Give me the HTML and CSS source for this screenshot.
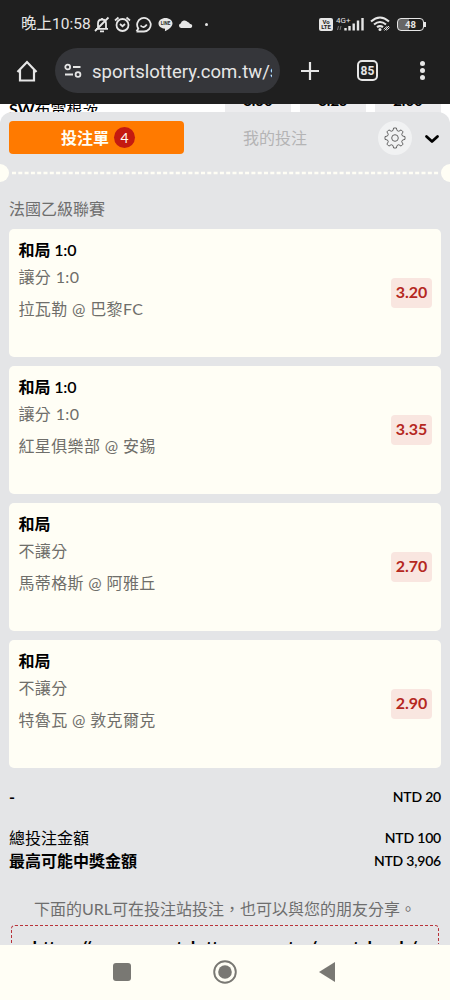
FILE: index.html
```html
<!DOCTYPE html>
<html lang="zh-Hant">
    <head>
        <meta charset="utf-8">
        <link rel="stylesheet" href="styles.css">
        <title>投注單</title>
    </head>
    <body>
        <div class="browser">
            <div class="status">
                <span class="clock">晚上10:58</span>
                <svg class="bell" width="16" height="17" viewBox="0 0 16 17">
                    <path d="M2 12.800h12M4 12V7.500Q4 3.500 8 3.500Q12 3.500 12 7.500V12M6 15.300h4M8 2v1.500M1 15L14.500 1.500" />
                </svg>
                <svg class="alarm" width="17" height="17" viewBox="0 0 17 17">
                    <circle cx="8.500" cy="9" r="6" />
                    <path d="M1 4.500L4.500 1.500M12.500 1.500L16 4.500M6 8l2.500 2.200L11 8" />
                </svg>
                <svg class="chat" width="17" height="17" viewBox="0 0 17 17">
                    <path d="M1.500 15.500h7.300A6.800 6.800 0 1 0 3.300 12.500L1.500 15.500M5.500 9.500Q8.800 13 11.800 8.500" />
                </svg>
                <svg class="line" width="15" height="15" viewBox="0 0 15 15">
                    <path d="M7.500 1C3.800 1 .5 3.300 .5 6.400c0 2.700 2.600 4.800 5.900 5.200.9.200.6 1.200.5 2.600 2.800-1.300 7.600-4.100 7.600-7.800C14.500 3.300 11.200 1 7.500 1z" />
                    <text x="7.500" y="8">LINE</text>
                </svg>
                <svg class="cloud" width="15" height="10" viewBox="0 0 15 10">
                    <path d="M3 9a2.300 2.300 0 0 1-.3-4.500A4 4 0 0 1 9.700 3 3.200 3.200 0 0 1 12 5a2 2 0 0 1 .5 4z" />
                </svg>
                <span class="dot"></span>
                <span class="volte"><b>Vo</b><b>LTE</b></span>
                <svg class="signal" width="29" height="16" viewBox="0 0 29 16">
                    <text x="0" y="6.500">4G+</text>
                    <path class="data" d="M1.500 14l1-4M4 14l1-4" />
                    <path d="M9.500 12v2.500M13.500 10v4.500M17.700 7.500v7M22 4.500v10M26.500 2v12.500" />
                </svg>
                <svg class="wifi" width="21" height="16" viewBox="0 0 21 16">
                    <path d="M1 5.500Q10 -2.500 19 5.500M4 8.500Q10 3.500 16 8.500M7 11.200Q10 9 13 11.200" />
                    <circle cx="10" cy="13.500" r="1.500" />
                    <path class="link" d="M14.500 14.500l4.500-4.500M13.800 13.300l2-2q1-1 2 0M19.500 11.500l-2 2q-1 1-2 0" />
                </svg>
                <span class="battery">48</span>
            </div>
            <div class="toolbar">
                <svg class="home" width="22" height="22" viewBox="0 0 22 22">
                    <path d="M1.500 12L11 2l9.500 10M4 10V20.500h14V10" />
                </svg>
                <div class="address">
                    <svg class="tune" width="18" height="16" viewBox="0 0 18 16">
                        <path d="M9 4h7.500M1 11.500h8" />
                        <circle cx="3.700" cy="4" r="2.400" />
                        <circle cx="14" cy="11.500" r="2.400" />
                    </svg>
                    <span class="url">sportslottery.com.tw/s</span>
                </div>
                <svg class="plus" width="20" height="20" viewBox="0 0 20 20">
                    <path d="M10 1v18M1 10h18" />
                </svg>
                <span class="tabs">85</span>
                <span class="more"><i></i><i></i><i></i></span>
            </div>
        </div>

        <div class="behind">
            <span class="team"><b>SW</b>布雷根茨</span>
            <span class="price">3.50</span>
            <span class="price">3.25</span>
            <span class="price">2.00</span>
        </div>

        <div class="slip">
            <div class="header">
                <div class="tab active">投注單<span class="count">4</span></div>
                <div class="tab">我的投注</div>
                <div class="settings">
                    <svg width="22" height="22" viewBox="0 0 22 22">
                        <path d="M9.600 1h2.800l.6 2.500 1.800.8 2.300-1.400 2 2-1.400 2.300.8 1.800 2.500.6v2.800l-2.500.6-.8 1.800 1.400 2.300-2 2-2.300-1.400-1.800.8-.6 2.500H9.600L9 18.500l-1.800-.8-2.300 1.400-2-2 1.400-2.300-.8-1.800L1 12.400V9.600L3.500 9l.8-1.800-1.400-2.300 2-2 2.300 1.400L9 3.500z" />
                        <circle cx="11" cy="11" r="3.300" />
                    </svg>
                </div>
                <svg class="chevron" width="16" height="10" viewBox="0 0 16 10">
                    <path d="M2.500 2.500l5.500 5 5.500-5" />
                </svg>
            </div>
            <div class="tear">
                <span class="notch"></span>
                <svg class="dashes" width="432" height="4">
                    <path d="M3 2H431" />
                </svg>
                <span class="notch right"></span>
            </div>

            <div class="league">法國乙級聯賽</div>
            <div class="bets">
                <div class="bet">
                    <div>
                        <div class="pick">和局 1:0</div>
                        <div class="market">讓分 1:0</div>
                        <div class="match">拉瓦勒 @ 巴黎FC</div>
                    </div>
                    <span class="odds">3.20</span>
                </div>
                <div class="bet">
                    <div>
                        <div class="pick">和局 1:0</div>
                        <div class="market">讓分 1:0</div>
                        <div class="match">紅星俱樂部 @ 安錫</div>
                    </div>
                    <span class="odds">3.35</span>
                </div>
                <div class="bet">
                    <div>
                        <div class="pick">和局</div>
                        <div class="market">不讓分</div>
                        <div class="match">馬蒂格斯 @ 阿雅丘</div>
                    </div>
                    <span class="odds">2.70</span>
                </div>
                <div class="bet">
                    <div>
                        <div class="pick">和局</div>
                        <div class="market">不讓分</div>
                        <div class="match">特魯瓦 @ 敦克爾克</div>
                    </div>
                    <span class="odds">2.90</span>
                </div>
            </div>

            <div class="row stake"><b>-</b><span class="amount">NTD 20</span></div>
            <div class="row"><span>總投注金額</span><span class="amount">NTD 100</span></div>
            <div class="row last"><b>最高可能中獎金額</b><span class="amount">NTD 3,906</span></div>

            <div class="hint">下面的URL可在投注站投注，也可以與您的朋友分享。</div>
            <div class="share">https://www.sportslottery.com.tw/sportsbook/</div>
        </div>

        <div class="nav">
            <span class="recent"></span>
            <svg width="26" height="26" viewBox="0 0 26 26">
                <circle class="ring" cx="13" cy="13" r="10.800" />
                <circle cx="13" cy="13" r="6.800" />
            </svg>
            <svg class="back" width="18" height="22" viewBox="0 0 18 22">
                <path d="M17 1v20L1 11z" />
            </svg>
        </div>
    </body>
</html>
```

FILE: styles.css
```css
* {
    box-sizing: border-box;
}
body {
    margin: 0;
    width: 450px;
    height: 1000px;
    overflow: hidden;
    display: flex;
    flex-direction: column;
    background-color: white;
    font-family: Lato, "Noto Sans CJK TC", sans-serif;
    font-size: 16px;
    color: black;
}
svg {
    display: block;
    flex: none;
    fill: none;
    stroke: #e6e6e6;
    stroke-width: 1.800;
}
.browser {
    height: 104px;
    flex: none;
    background-color: #1f1f1f;
    color: #e6e6e6;
    font-family: Roboto, "Noto Sans CJK TC", sans-serif;
}
.status {
    height: 48px;
    display: flex;
    align-items: center;
    padding-left: 21px;
}
.clock {
    width: 73px;
    font-size: 15.5px;
    line-height: 20px;
    white-space: nowrap;
}
.alarm {
    margin-left: 4px;
}
.chat {
    margin-left: 4px;
}
.line {
    margin-left: 6px;
    fill: #e6e6e6;
    stroke: none;
}
.line text {
    font-size: 4.500px;
    font-weight: bold;
    text-anchor: middle;
    fill: #1f1f1f;
}
.cloud {
    margin-left: 5px;
    fill: #e6e6e6;
    stroke: none;
}
.dot {
    width: 3px;
    height: 3px;
    margin-left: 12px;
    border-radius: 50%;
    background-color: #e6e6e6;
}
.volte {
    width: 14px;
    height: 13px;
    margin-left: 111px;
    padding-top: 1px;
    display: flex;
    flex-direction: column;
    align-items: center;
    border-radius: 2px;
    background-color: #e6e6e6;
    color: #1f1f1f;
    font-size: 6px;
    line-height: 5.500px;
}
.signal {
    margin-left: 3px;
    stroke-width: 2.400;
}
.signal text {
    fill: #e6e6e6;
    stroke: none;
    font-size: 8px;
}
.signal .data {
    stroke: #777;
    stroke-width: 1;
}
.wifi {
    margin-left: 5px;
    stroke-width: 2.100;
}
.wifi circle {
    fill: #e6e6e6;
    stroke: none;
}
.wifi .link {
    stroke-width: 1;
}
.battery {
    position: relative;
    width: 27px;
    height: 13px;
    margin-left: 6px;
    border: 1.500px solid #e6e6e6;
    border-radius: 4px;
    background: linear-gradient(to right, #666 45%, #1f1f1f 45%);
    font-size: 9.500px;
    font-weight: bold;
    line-height: 11px;
    text-align: center;
}
.battery::after {
    content: "";
    position: absolute;
    right: -3px;
    top: 3px;
    width: 2px;
    height: 5px;
    background-color: #e6e6e6;
}
.toolbar {
    height: 45px;
    display: flex;
    align-items: center;
}
.home {
    margin-left: 16px;
    stroke-width: 2.200;
}
.address {
    width: 225px;
    height: 45px;
    margin-left: 17px;
    padding: 0 8px 0 9px;
    display: flex;
    align-items: center;
    border-radius: 23px;
    background-color: #35363a;
}
.url {
    width: 180px;
    margin-left: 10px;
    overflow: hidden;
    white-space: nowrap;
    font-size: 18.500px;
    line-height: 28px;
    padding-top: 2px;
}
.plus {
    margin-left: 20px;
    stroke-width: 2.200;
}
.tabs {
    width: 21px;
    height: 21px;
    margin-left: 37px;
    border: 2px solid #e6e6e6;
    border-radius: 5px;
    font-size: 12px;
    font-weight: bold;
    line-height: 18px;
    text-align: center;
}
.more {
    margin-left: 42px;
    display: flex;
    flex-direction: column;
    gap: 2px;
}
.more i {
    width: 5px;
    height: 5px;
    border-radius: 50%;
    background-color: #e6e6e6;
}
.behind {
    height: 20px;
    flex: none;
    display: flex;
    padding-left: 9px;
    overflow: hidden;
    line-height: 20px;
}
.team {
    width: 216px;
    margin-top: -5px;
    font-size: 16px;
}
.price {
    width: 66px;
    height: 26px;
    margin: -4px 9px 0 0;
    background-color: #ececee;
    font-size: 15px;
    line-height: 0;
    font-weight: bold;
    text-align: center;
}
.slip {
    height: 833px;
    margin-top: -12px;
    flex: none;
    overflow: hidden;
    position: relative;
    border-radius: 12px 12px 0 0;
    background-color: #e4e5e7;
}
.header {
    height: 51px;
    display: flex;
    align-items: center;
    padding-left: 9px;
}
.tab {
    width: 182px;
    height: 33px;
    padding-bottom: 1px;
    display: flex;
    align-items: center;
    justify-content: center;
    color: #b4b4b5;
}
.tab.active {
    width: 175px;
    padding-left: 3px;
    padding-bottom: 0;
    border-radius: 4px;
    background-color: #ff7a00;
    color: #fffef5;
    font-weight: bold;
    line-height: 22px;
}
.count {
    width: 21px;
    height: 21px;
    margin-left: 5px;
    border-radius: 50%;
    background-color: #c41a10;
    font-size: 14px;
    font-weight: normal;
    line-height: 21px;
    text-align: center;
}
.settings {
    width: 34px;
    height: 34px;
    margin-left: 12px;
    display: flex;
    align-items: center;
    justify-content: center;
    border-radius: 50%;
    background-color: #f1f2f3;
}
.settings svg {
    stroke: #666;
    stroke-width: 1;
}
.chevron {
    margin: 2px 0 0 12px;
    stroke: black;
    stroke-width: 2.800;
    stroke-linecap: round;
    stroke-linejoin: round;
}
.tear {
    height: 20px;
    display: flex;
    align-items: center;
}
.notch {
    width: 9px;
    height: 18px;
    flex: none;
    border-radius: 0 9px 9px 0;
    background-color: #fffef5;
}
.notch.right {
    border-radius: 9px 0 0 9px;
}
.dashes path {
    stroke: #fffef5;
    stroke-width: 2.500;
    stroke-dasharray: 4 2.300;
}
.league {
    margin: 14px 9px 0;
    height: 32px;
    line-height: 24px;
    color: #6e6e6e;
}
.bets {
    display: flex;
    flex-direction: column;
    gap: 9px;
    padding: 0 9px;
}
.bet {
    height: 128px;
    padding: 7px 9px 0 9.500px;
    display: flex;
    justify-content: space-between;
    border-radius: 5px;
    background-color: #fffef5;
    line-height: 27px;
}
.pick {
    font-weight: 600;
    letter-spacing: -0.1px;
}
.market,
.match {
    color: #6f6e6a;
    letter-spacing: 0.350px;
}
.match {
    margin-top: 5px;
}
.odds {
    width: 41px;
    height: 30px;
    margin-top: 42px;
    border-radius: 4px;
    background-color: #f9e6e0;
    color: #b5281f;
    font-weight: bold;
    line-height: 28px;
    text-align: center;
}
.row {
    height: 24px;
    padding: 0 9px;
    display: flex;
    justify-content: space-between;
    line-height: 24px;
}
.stake {
    height: 41px;
    margin-top: 17px;
}
.last {
    margin-top: -1px;
}
.amount {
    font-size: 14px;
    font-weight: 600;
    letter-spacing: -0.2px;
}
.hint {
    margin-top: 24px;
    height: 28px;
    line-height: 24px;
    text-align: center;
    color: #6e6e6e;
}
.share {
    height: 19px;
    margin: 0 11px;
    padding-top: 10px;
    overflow: hidden;
    border: 1px dashed #b8323a;
    border-bottom: none;
    border-radius: 4px 4px 0 0;
    font-weight: bold;
    font-size: 18.400px;
    line-height: 24px;
    text-align: center;
}
.nav {
    height: 55px;
    flex: none;
    display: flex;
    align-items: center;
    padding: 0 0 2px 113px;
    background-color: #fffef5;
}
.recent {
    width: 18px;
    height: 18px;
    margin-right: 81px;
    border-radius: 3px;
    background-color: #797873;
}
.nav svg {
    fill: #797873;
    stroke: none;
}
.nav .ring {
    fill: none;
    stroke: #797873;
    stroke-width: 1.900;
}
.nav .back {
    margin-left: 80px;
}
```
